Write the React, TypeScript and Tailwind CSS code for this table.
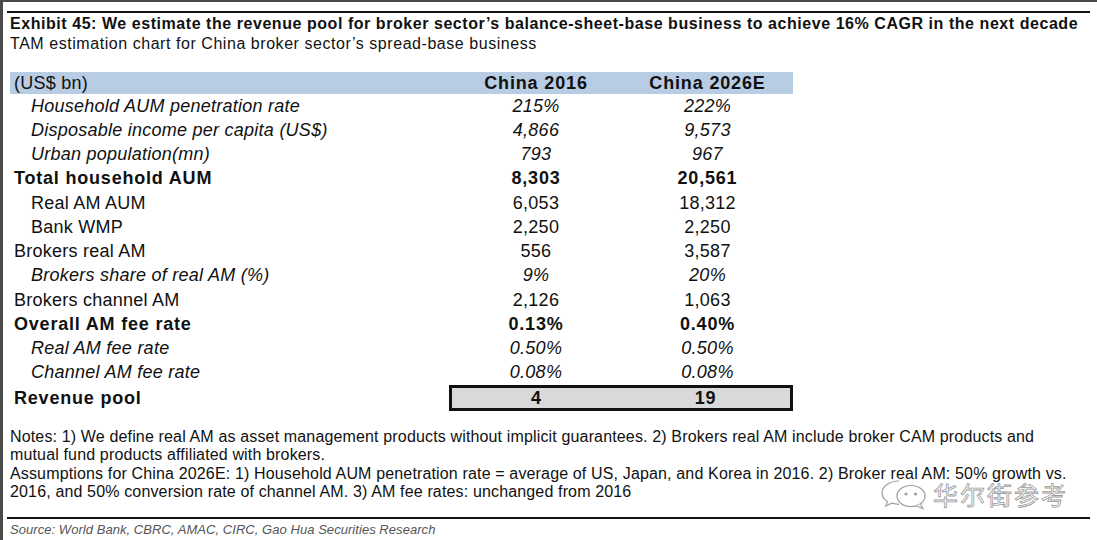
import React from "react";

type Row = {
  label: string;
  a: string;
  b: string;
  kind: "italic" | "bold" | "plain";
  indent: boolean;
};

const rows: Row[] = [
  { label: "Household AUM penetration rate", a: "215%", b: "222%", kind: "italic", indent: true },
  { label: "Disposable income per capita (US$)", a: "4,866", b: "9,573", kind: "italic", indent: true },
  { label: "Urban population(mn)", a: "793", b: "967", kind: "italic", indent: true },
  { label: "Total household AUM", a: "8,303", b: "20,561", kind: "bold", indent: false },
  { label: "Real AM AUM", a: "6,053", b: "18,312", kind: "plain", indent: true },
  { label: "Bank WMP", a: "2,250", b: "2,250", kind: "plain", indent: true },
  { label: "Brokers real AM", a: "556", b: "3,587", kind: "plain", indent: false },
  { label: "Brokers share of real AM (%)", a: "9%", b: "20%", kind: "italic", indent: true },
  { label: "Brokers channel AM", a: "2,126", b: "1,063", kind: "plain", indent: false },
  { label: "Overall AM fee rate", a: "0.13%", b: "0.40%", kind: "bold", indent: false },
  { label: "Real AM fee rate", a: "0.50%", b: "0.50%", kind: "italic", indent: true },
  { label: "Channel AM fee rate", a: "0.08%", b: "0.08%", kind: "italic", indent: true },
];

function kindClass(k: Row["kind"]) {
  if (k === "italic") return "italic tracking-[0.25px]";
  if (k === "bold") return "font-bold tracking-[0.8px]";
  return "tracking-[0.25px]";
}

function WeChat() {
  return (
    <svg width="48" height="32" viewBox="0 0 48 32" fill="none" stroke="#a0a0a0" strokeWidth="1.2">
      <path d="M19 3 C9.5 3 2 8.5 2 15 C2 18.6 4.2 21.6 7.5 23.6 L5.8 28 L11.6 25.2 C14 25.9 16.4 26.3 19 26.3" />
      <ellipse cx="31" cy="18" rx="14" ry="10.5" fill="white" />
      <path d="M40.5 26 L43 30.5 L36.5 28" fill="white" />
      <circle cx="26" cy="16" r="1" fill="#a0a0a0" />
      <circle cx="35.5" cy="16" r="1" fill="#a0a0a0" />
    </svg>
  );
}

export default function App() {
  return (
    <div className="relative w-[1097px] h-[540px] overflow-hidden bg-white border-t-2 border-l-[3px] border-[#4a4a4a] font-['Liberation_Sans',Arial,sans-serif] text-[#111]">
      <div className="pl-[4px] pr-[7px] pt-[9px]">
        <div className="h-[2px] bg-[#111]" />
        <div className="pl-[3px]">
          <div className="text-[16px] font-bold leading-[20px] mt-[1px] tracking-[0.55px]">
            Exhibit 45: We estimate the revenue pool for broker sector’s balance-sheet-base business to achieve 16% CAGR in the next decade
          </div>
          <div className="text-[16px] leading-[19px] tracking-[0.55px]">
            TAM estimation chart for China broker sector’s spread-base business
          </div>

          {/* Table */}
          <div className="mt-[19px] w-[783px] text-[18px]">
            <div className="flex h-[22px] items-center bg-[#b8cce4]">
              <div className="w-[440px] pl-[4px] tracking-[0.25px]">(US$ bn)</div>
              <div className="w-[172px] text-center font-bold tracking-[0.85px]">China 2016</div>
              <div className="w-[171px] text-center font-bold tracking-[0.85px]">China 2026E</div>
            </div>
            {rows.map((r) => (
              <div key={r.label} className={`flex h-[24.25px] items-center ${kindClass(r.kind)}`}>
                <div className={`w-[440px] ${r.indent ? "pl-[21px]" : "pl-[4px]"}`}>{r.label}</div>
                <div className="w-[172px] text-center">{r.a}</div>
                <div className="w-[171px] text-center">{r.b}</div>
              </div>
            ))}
            <div className="flex h-[26px] items-center font-bold tracking-[0.8px]">
              <div className="w-[440px] pl-[4px]">Revenue pool</div>
              <div className="flex h-[26px] w-[344px] items-center border-[3px] border-[#111] bg-[#d9d9d9]">
                <div className="w-[169px] text-center">4</div>
                <div className="w-[169px] text-center">19</div>
              </div>
            </div>
          </div>

          {/* Notes */}
          <div className="mt-[17px] text-[16px] leading-[18.4px] tracking-[0.15px]">
            <div>Notes: 1) We define real AM as asset management products without implicit guarantees. 2) Brokers real AM include broker CAM products and</div>
            <div>mutual fund products affiliated with brokers.</div>
            <div>Assumptions for China 2026E: 1) Household AUM penetration rate = average of US, Japan, and Korea in 2016. 2) Broker real AM: 50% growth vs.</div>
            <div>2016, and 50% conversion rate of channel AM. 3) AM fee rates: unchanged from 2016</div>
          </div>
        </div>
        <div className="mt-[15px] h-[2px] bg-[#111]" />
        <div className="pl-[3px] pt-[3px] text-[13px] italic leading-[16px] tracking-[0.05px] text-[#555]">
          Source: World Bank, CBRC, AMAC, CIRC, Gao Hua Securities Research
        </div>
      </div>

      {/* Watermark */}
      <div className="absolute left-[877px] top-[476px] flex items-center">
        <WeChat />
        <span className="ml-[5px] text-[25px] leading-[30px] tracking-[2px] text-white/70 [-webkit-text-stroke:0.8px_#9a9a9a] font-['Noto_Sans_CJK_SC',sans-serif]">
          华尔街参考
        </span>
      </div>
    </div>
  );
}
